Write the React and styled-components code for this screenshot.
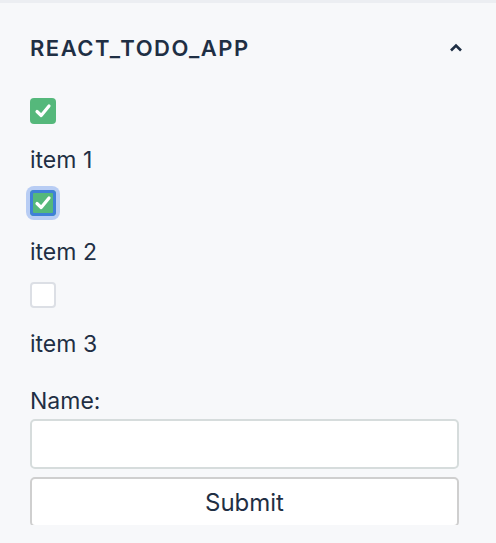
import React from "react";
import styled, { createGlobalStyle } from "styled-components";

const Global = createGlobalStyle`
  html, body { margin: 0; padding: 0; background: #f7f8fa; }
  body { font-family: Inter, "Noto Sans", sans-serif; color: #1f2f44; }
`;

const Page = styled.div`
  width: 496px;
  height: 543px;
  background: #f7f8fa;
  border-top: 3px solid #eceef2;
  box-sizing: border-box;
`;

const Panel = styled.div`
  height: 522px;
  overflow: hidden;
  padding: 0 30px 0 30px;
  box-sizing: border-box;
`;

const Header = styled.div`
  display: flex;
  align-items: center;
  justify-content: space-between;
  height: 90px;
  padding-right: 3px;
`;

const Title = styled.h2`
  margin: 0;
  font-size: 22px;
  font-weight: 600;
  letter-spacing: 1.5px;
  color: #1f2f44;
`;

const Items = styled.div`
  display: flex;
  flex-direction: column;
`;

const Item = styled.div`
  display: flex;
  flex-direction: column;
  align-items: flex-start;
  padding-top: 5px;
`;

const Box = styled.span`
  display: flex;
  align-items: center;
  justify-content: center;
  width: 26px;
  height: 26px;
  box-sizing: border-box;
  border-radius: 4px;
  background: ${(p) => (p.$checked ? "#55b87b" : "#ffffff")};
  border: ${(p) => (p.$checked ? "none" : "2px solid #dcdfe5")};
  box-shadow: ${(p) =>
    p.$focused ? "inset 0 0 0 3px #3f80d8, 0 0 0 4px rgba(90, 140, 235, 0.4)" : "none"};
`;

const Label = styled.div`
  font-size: 23px;
  line-height: 30px;
  margin-top: 21px;
  margin-bottom: 10px;
`;

const Form = styled.form`
  display: flex;
  flex-direction: column;
  margin-top: 19px;
`;

const FieldLabel = styled.label`
  font-size: 23px;
  line-height: 26px;
  margin-bottom: 5px;
`;

const Input = styled.input`
  height: 50px;
  box-sizing: border-box;
  border: 2px solid #d6dcdc;
  border-radius: 5px;
  background: #fff;
  width: 429px;
  margin: 0;
`;

const Button = styled.button`
  margin-top: 8px;
  height: 50px;
  width: 429px;
  box-sizing: border-box;
  border: 2px solid #cfcfcf;
  border-radius: 5px;
  background: #fff;
  font-family: Inter, "Noto Sans", sans-serif;
  font-size: 24px;
  color: #1f2f44;
  padding: 0;
`;

const Check = () => (
  <svg width="20" height="20" viewBox="0 0 20 20">
    <polyline points="4,10.5 8.2,14.5 16,5" fill="none" stroke="#fff" strokeWidth="3.2" strokeLinecap="round" strokeLinejoin="round" />
  </svg>
);

const Chevron = () => (
  <svg width="14" height="10" viewBox="0 0 14 10">
    <polyline points="2,7.5 7,2.5 12,7.5" fill="none" stroke="#1f2f44" strokeWidth="2.6" />
  </svg>
);

const items = [
  { name: "item 1", checked: true },
  { name: "item 2", checked: true, focused: true },
  { name: "item 3", checked: false },
];

export default function App() {
  return (
    <>
      <Global />
      <Page>
        <Panel>
          <Header>
            <Title>REACT_TODO_APP</Title>
            <Chevron />
          </Header>
          <Items>
            {items.map((it) => (
              <Item key={it.name}>
                <Box $checked={it.checked} $focused={it.focused}>
                  {it.checked && <Check />}
                </Box>
                <Label>{it.name}</Label>
              </Item>
            ))}
          </Items>
          <Form onSubmit={(e) => e.preventDefault()}>
            <FieldLabel>Name:</FieldLabel>
            <Input type="text" />
            <Button type="submit">Submit</Button>
          </Form>
        </Panel>
      </Page>
    </>
  );
}
